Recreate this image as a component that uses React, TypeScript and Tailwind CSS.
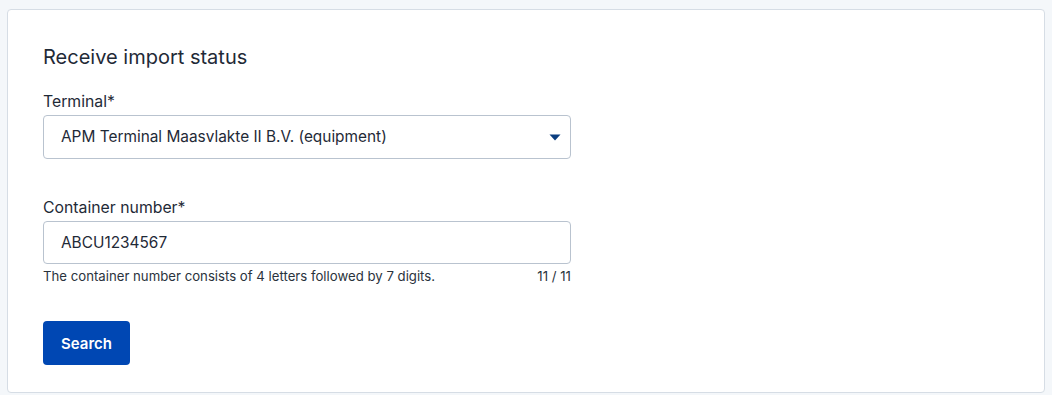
import React from "react";

export default function App() {
  return (
    <div className="min-h-screen bg-[#f4f7fa] pt-[9px] pl-[7px] pr-[7px] pb-[2px]" style={{ fontFamily: "Inter, 'Noto Sans', sans-serif" }}>
      <div className="w-[1038px] h-[384px] bg-white border border-[#d6dde5] rounded-[4px] pl-[35px] pt-[33px]">
        <h1 className="text-[20px] leading-[28px] text-[#1f2a37] font-normal">Receive import status</h1>
        <div className="mt-[20px] w-[528px]">
          <label className="block text-[15.8px] leading-[22px] text-[#1f2a37]">Terminal*</label>
          <div className="mt-[2px] h-[44px] border border-[#b9c3cf] rounded-[4px] flex items-center justify-between pl-[17px] pr-[9px]">
            <span className="text-[15.4px] text-[#1f2a37]">APM Terminal Maasvlakte II B.V. (equipment)</span>
            <svg width="12" height="7" viewBox="0 0 12 7">
              <path d="M0.5 0.5 H11.5 L6 6.5 Z" fill="#0b3e80" />
            </svg>
          </div>
        </div>
        <div className="mt-[38px] w-[528px]">
          <label className="block text-[15.8px] leading-[22px] text-[#1f2a37]">Container number*</label>
          <div className="mt-[2px] h-[43px] border border-[#b9c3cf] rounded-[4px] flex items-center pl-[17px]">
            <span className="text-[15.4px] text-[#1f2a37]">ABCU1234567</span>
          </div>
          <div className="mt-[4px] flex justify-between text-[13.2px] leading-[17px] text-[#2a333d]">
            <span>The container number consists of 4 letters followed by 7 digits.</span>
            <span>11 / 11</span>
          </div>
        </div>
        <button className="mt-[36px] w-[87px] h-[44px] bg-[#0047b3] rounded-[4px] text-white text-[15px] font-semibold pt-[2px]">Search</button>
      </div>
    </div>
  );
}
